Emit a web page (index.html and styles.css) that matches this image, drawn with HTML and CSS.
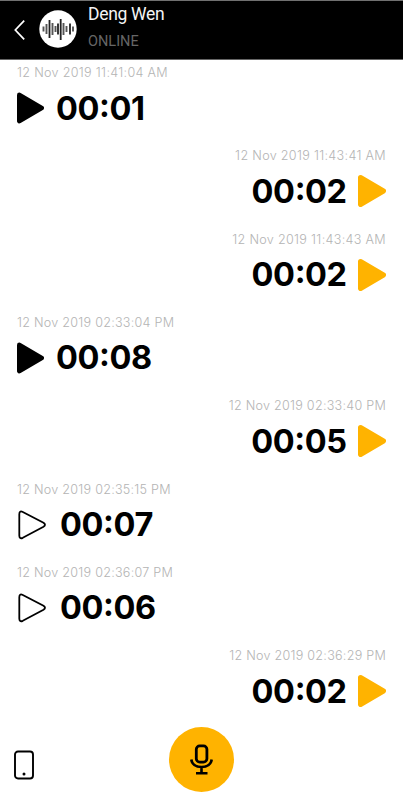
FILE: index.html
```
<!DOCTYPE html>
<html lang="en">
<head>
<meta charset="utf-8">
<title>Deng Wen</title>
<link rel="stylesheet" href="styles.css">
</head>
<body>
<svg class="defs" width="0" height="0">
  <symbol id="play" viewBox="0 0 28 32"><path d="M2.500 2.500 L25.500 16 L2.500 29.500 Z" fill="currentColor" stroke="currentColor" stroke-width="5" stroke-linejoin="round"/></symbol>
  <symbol id="play-outline" viewBox="0 0 28 32"><path d="M1.300 5.300 Q1.300 1.200 4.800 3 L25.500 13.800 Q28.500 15.900 25.500 17.800 L4.800 28.800 Q1.300 30.300 1.300 26.600 Z" fill="none" stroke="currentColor" stroke-width="1.800"/></symbol>
</svg>
<div class="app">
  <header class="header">
    <svg class="back" width="12" height="20" viewBox="0 0 12 20"><path d="M10.2 0.700 L1.300 10 L10.2 19.300" fill="none" stroke="#fff" stroke-width="1.700"/></svg>
    <svg class="avatar" width="38" height="38" viewBox="0 0 38 38">
      <circle cx="19" cy="19" r="18.700" fill="#fff"/>
      <path d="M4.500 16.500v5M7.500 14v10M13.500 13v12M16.500 16v6M24.500 13v12M27.500 16v6M34 16.500v5" stroke="#555" stroke-width="1.900"/>
      <path d="M10.500 10v18M19 13.500v11M21.700 9v21M31 13.500v11" stroke="#222" stroke-width="1.800"/>
    </svg>
    <div class="who"><div class="name">Deng Wen</div><div class="status">ONLINE</div></div>
  </header>
  <main class="messages">
    <div class="msg"><time class="date am">12 Nov 2019 11:41:04 AM</time><div class="clip"><svg class="play"><use href="#play"/></svg><span class="time">00<span class="colon">:</span>01</span></div></div>
    <div class="msg sent"><time class="date am">12 Nov 2019 11:43:41 AM</time><div class="clip"><span class="time">00<span class="colon">:</span>02</span><svg class="play"><use href="#play"/></svg></div></div>
    <div class="msg sent"><time class="date am">12 Nov 2019 11:43:43 AM</time><div class="clip"><span class="time">00<span class="colon">:</span>02</span><svg class="play"><use href="#play"/></svg></div></div>
    <div class="msg"><time class="date">12 Nov 2019 02:33:04 PM</time><div class="clip"><svg class="play"><use href="#play"/></svg><span class="time">00<span class="colon">:</span>08</span></div></div>
    <div class="msg sent"><time class="date">12 Nov 2019 02:33:40 PM</time><div class="clip"><span class="time">00<span class="colon">:</span>05</span><svg class="play"><use href="#play"/></svg></div></div>
    <div class="msg unplayed"><time class="date">12 Nov 2019 02:35:15 PM</time><div class="clip"><svg class="play"><use href="#play-outline"/></svg><span class="time">00<span class="colon">:</span>07</span></div></div>
    <div class="msg unplayed"><time class="date">12 Nov 2019 02:36:07 PM</time><div class="clip"><svg class="play"><use href="#play-outline"/></svg><span class="time">00<span class="colon">:</span>06</span></div></div>
    <div class="msg sent"><time class="date">12 Nov 2019 02:36:29 PM</time><div class="clip"><span class="time">00<span class="colon">:</span>02</span><svg class="play"><use href="#play"/></svg></div></div>
  </main>
  <footer class="footer">
    <svg class="phone" width="20" height="30" viewBox="0 0 20 30"><rect x="1" y="1.500" width="18" height="27" rx="3" fill="none" stroke="#000" stroke-width="1.900"/><circle cx="10" cy="24" r="1.500"/></svg>
    <div class="record"><svg width="24" height="32" viewBox="0 0 24 32"><rect x="7.300" y="1.900" width="10.600" height="16.200" rx="3.400" fill="none" stroke="#000" stroke-width="2.800"/><path d="M2.300 15.500C2.800 20 6.600 23 12.500 23s9.700-3 10.200-7.500M12.500 23v6.500M7 29.300h11.500" fill="none" stroke="#000" stroke-width="2.600"/></svg></div>
    <div></div>
  </footer>
</div>
</body>
</html>
```
FILE: styles.css
```
body { margin: 0; background: #fff; font-family: Inter, sans-serif; }
.defs { position: absolute; }
.app { width: 403px; height: 800px; overflow: hidden; display: flex; flex-direction: column; }
.header { box-sizing: border-box; height: 60px; flex: none; background: #000; border-top: 1px solid #707070; border-bottom: 1px solid #666; display: flex; padding-left: 14px; font-family: Roboto, sans-serif; }
.back { margin-top: 19px; }
.avatar { margin: 9px 0 0 13px; }
.who { margin-left: 11px; }
.name { font-size: 17.5px; line-height: 22px; margin-top: 2px; color: #f4f4f4; letter-spacing: -.3px; white-space: nowrap; }
.status { font-size: 14.5px; line-height: 18px; margin-top: 8px; color: #666; }
.messages { height: 667px; flex: none; }
.msg { height: 83.33px; display: flex; flex-direction: column; align-items: flex-start; padding: 0 17px; }
.sent { align-items: flex-end; }
.date { font-size: 12.6px; line-height: 16px; margin-top: 5px; color: #b4b4b4; font-weight: 300; letter-spacing: .25px; white-space: nowrap; }
.date.am { letter-spacing: .31px; }
.clip { display: flex; align-items: center; height: 36px; margin-top: 9px; gap: 12px; }
.play { width: 27px; height: 32px; flex: none; }
.sent .play { color: #ffb300; width: 28px; }
.time { font-size: 32.5px; line-height: 36px; font-weight: 650; color: #000; letter-spacing: -.4px; margin-top: 1px; }
.colon { display: inline-block; transform: translateY(-3px); }
.sent .time { margin-right: -.7px; }
.unplayed .play { width: 28px; margin-left: 1px; }
.unplayed .clip { gap: 14px; }
.footer { flex: 1; display: grid; grid-template-columns: 1fr 66px 1fr; }
.phone { margin: 23px 0 0 14px; }
.record { width: 65px; height: 65px; border-radius: 50%; background: #ffb300; display: flex; align-items: center; justify-content: center; }
```
